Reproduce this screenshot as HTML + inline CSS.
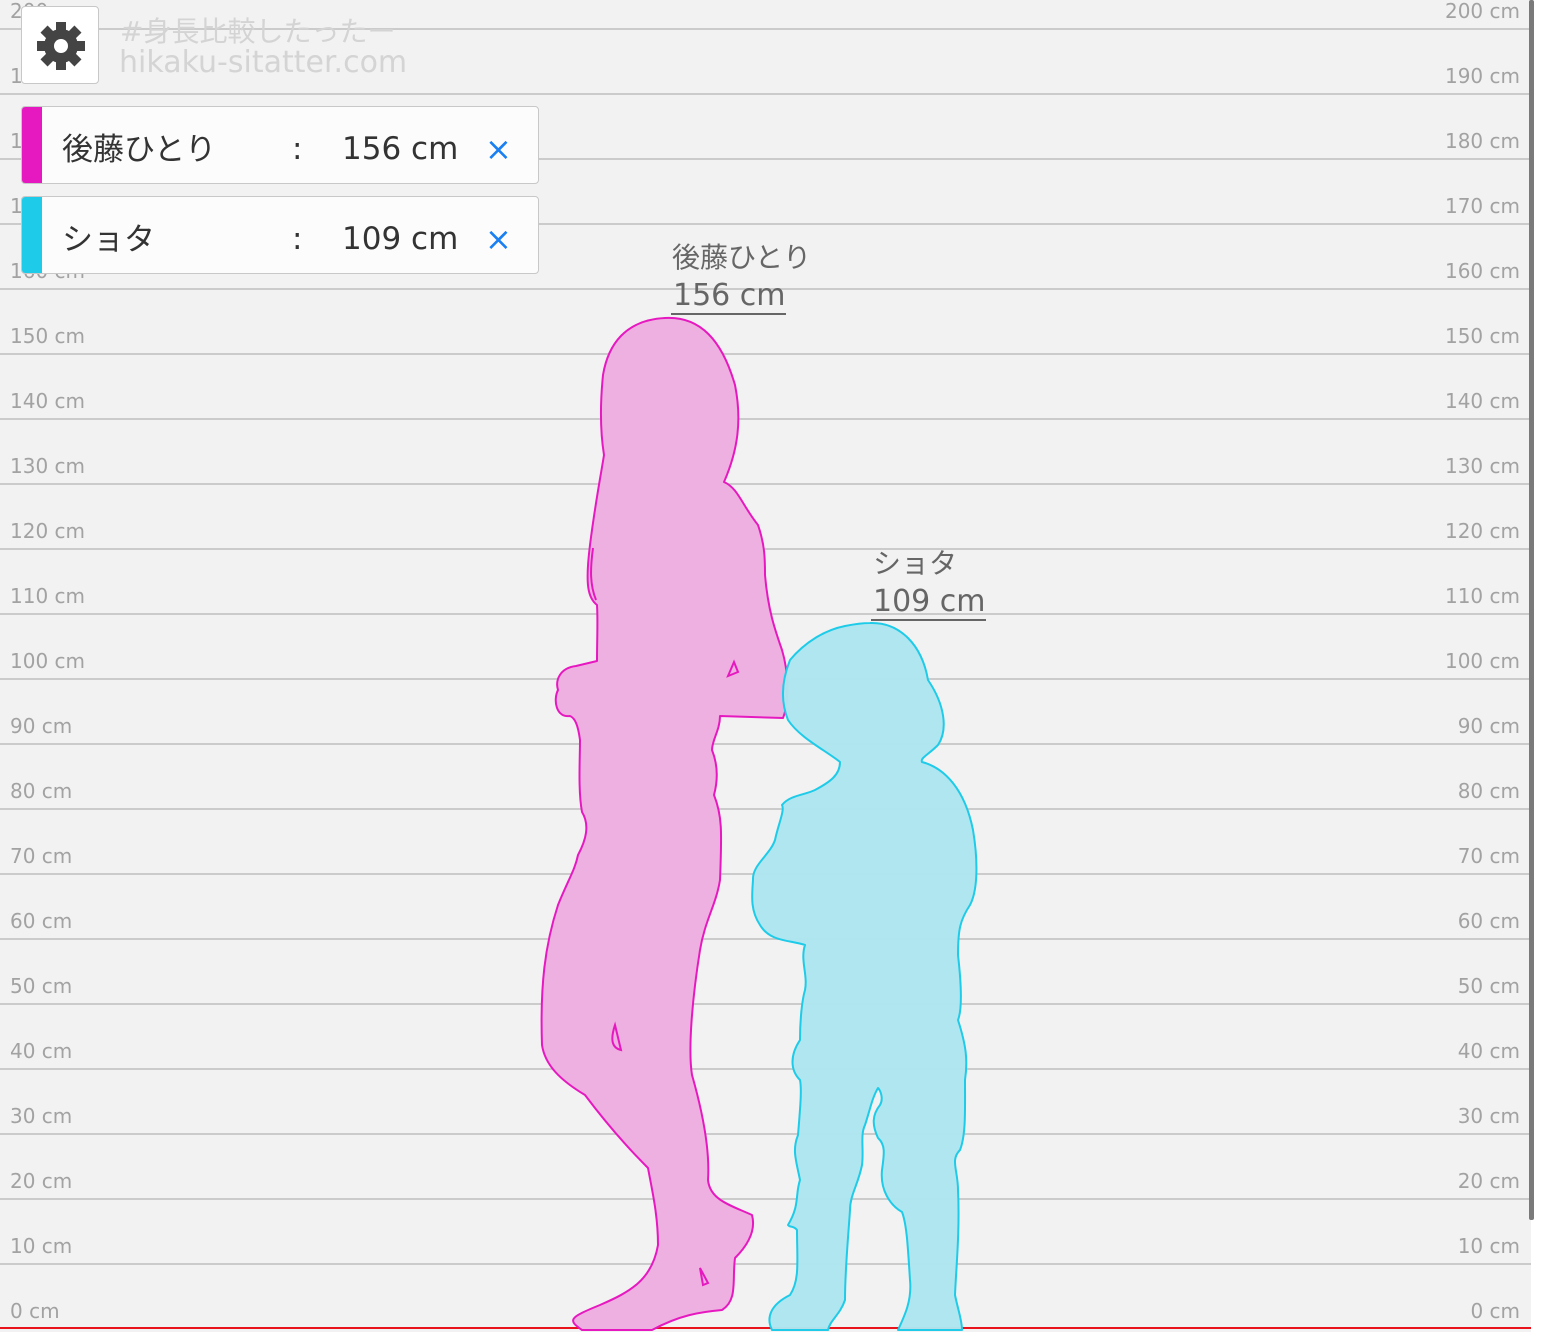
<!DOCTYPE html>
<html><head><meta charset="utf-8"><style>
html,body{margin:0;padding:0}
body{width:1541px;height:1332px;position:relative;overflow:hidden;background:#fff;font-family:"DejaVu Sans","Noto Sans CJK JP",sans-serif}
#chart{position:absolute;left:0;top:0;width:1531px;height:1332px;background:#f2f2f2}
.ln{position:absolute;left:0;width:1531px;height:2px;background:#cbcbcb}
.lb{position:absolute;font-size:20px;color:#a2a2a2;line-height:22px}
.l{left:10px}.r{right:11px;text-align:right}
.card{position:absolute;left:21px;width:516px;height:76px;background:#fcfcfc;border:1px solid #c8c8c8;border-radius:4px;overflow:hidden}
.card .bar{position:absolute;left:0;top:0;width:20px;height:100%}
.card span{position:absolute;top:24px;font-size:31px;color:#333;line-height:36px}
.cj{font-family:"Noto Sans CJK JP",sans-serif}
</style></head><body>
<div id="chart">
<div class="ln" style="top:28px"></div><div class="ln" style="top:93px"></div><div class="ln" style="top:158px"></div><div class="ln" style="top:223px"></div><div class="ln" style="top:288px"></div><div class="ln" style="top:353px"></div><div class="ln" style="top:418px"></div><div class="ln" style="top:483px"></div><div class="ln" style="top:548px"></div><div class="ln" style="top:613px"></div><div class="ln" style="top:678px"></div><div class="ln" style="top:743px"></div><div class="ln" style="top:808px"></div><div class="ln" style="top:873px"></div><div class="ln" style="top:938px"></div><div class="ln" style="top:1003px"></div><div class="ln" style="top:1068px"></div><div class="ln" style="top:1133px"></div><div class="ln" style="top:1198px"></div><div class="ln" style="top:1263px"></div>
<div class="ln" style="top:1327px;background:#e8131b"></div>

<div class="lb l" style="top:0px">200 cm</div><div class="lb r" style="top:0px">200 cm</div>
<div class="lb l" style="top:65px">190 cm</div><div class="lb r" style="top:65px">190 cm</div>
<div class="lb l" style="top:130px">180 cm</div><div class="lb r" style="top:130px">180 cm</div>
<div class="lb l" style="top:195px">170 cm</div><div class="lb r" style="top:195px">170 cm</div>
<div class="lb l" style="top:260px">160 cm</div><div class="lb r" style="top:260px">160 cm</div>
<div class="lb l" style="top:325px">150 cm</div><div class="lb r" style="top:325px">150 cm</div>
<div class="lb l" style="top:390px">140 cm</div><div class="lb r" style="top:390px">140 cm</div>
<div class="lb l" style="top:455px">130 cm</div><div class="lb r" style="top:455px">130 cm</div>
<div class="lb l" style="top:520px">120 cm</div><div class="lb r" style="top:520px">120 cm</div>
<div class="lb l" style="top:585px">110 cm</div><div class="lb r" style="top:585px">110 cm</div>
<div class="lb l" style="top:650px">100 cm</div><div class="lb r" style="top:650px">100 cm</div>
<div class="lb l" style="top:715px">90 cm</div><div class="lb r" style="top:715px">90 cm</div>
<div class="lb l" style="top:780px">80 cm</div><div class="lb r" style="top:780px">80 cm</div>
<div class="lb l" style="top:845px">70 cm</div><div class="lb r" style="top:845px">70 cm</div>
<div class="lb l" style="top:910px">60 cm</div><div class="lb r" style="top:910px">60 cm</div>
<div class="lb l" style="top:975px">50 cm</div><div class="lb r" style="top:975px">50 cm</div>
<div class="lb l" style="top:1040px">40 cm</div><div class="lb r" style="top:1040px">40 cm</div>
<div class="lb l" style="top:1105px">30 cm</div><div class="lb r" style="top:1105px">30 cm</div>
<div class="lb l" style="top:1170px">20 cm</div><div class="lb r" style="top:1170px">20 cm</div>
<div class="lb l" style="top:1235px">10 cm</div><div class="lb r" style="top:1235px">10 cm</div>
<div class="lb l" style="top:1300px">0 cm</div><div class="lb r" style="top:1300px">0 cm</div>

<svg style="position:absolute;left:0;top:0" width="1531" height="1332">
<path fill="#eeb0e0" stroke="#e619c0" stroke-width="2" stroke-linejoin="round" d="M665,318 C700,316 722,340 735,385 C742,420 738,450 724,482 C738,488 742,505 758,525 C765,545 765,560 765,575 C768,610 775,630 782,650 C788,670 790,700 783,718 L720,716 C720,730 712,740 712,750 C718,765 718,780 714,795 C722,815 722,830 720,880 C716,905 705,920 700,950 C692,1000 688,1050 692,1075 C702,1110 710,1150 708,1180 C710,1200 730,1205 752,1215 C756,1230 748,1245 735,1258 C732,1280 738,1300 722,1310 C700,1312 680,1315 652,1330 L582,1330 C568,1320 568,1318 600,1305 C630,1292 652,1280 658,1245 C658,1215 652,1190 648,1168 C620,1140 600,1115 585,1095 C560,1080 545,1065 542,1045 C540,985 545,945 558,905 C568,880 575,870 578,855 C586,840 590,825 582,812 C578,790 580,760 580,740 C578,725 575,718 570,716 C556,718 553,700 558,690 C555,680 560,668 576,666 L597,661 C597,640 598,620 597,605 C588,598 585,585 590,545 C595,505 600,480 604,455 C600,430 600,405 603,375 C608,345 625,320 665,318 Z"/>
<path fill="none" stroke="#e619c0" stroke-width="2" d="M615,1025 C610,1040 612,1048 621,1050 Z M734,662 L738,672 L728,676 Z M700,1268 L708,1283 L703,1285 Z M593,548 C590,570 590,585 596,600"/>
<path fill="#aee5ef" fill-opacity="0.98" stroke="#1ecbe8" stroke-width="2" stroke-linejoin="round" d="M870,623 C900,622 922,645 928,680 C945,705 948,730 938,745 C928,755 920,758 922,762 C945,768 965,790 973,830 C978,860 978,890 970,905 C960,920 958,930 958,955 C962,990 962,1010 958,1020 C966,1045 968,1060 965,1080 C965,1110 966,1135 960,1150 C950,1160 958,1170 958,1190 C960,1230 956,1270 955,1295 C958,1310 962,1320 962,1330 L898,1330 C905,1315 912,1300 910,1280 C908,1250 907,1225 902,1212 C890,1205 880,1190 882,1170 C884,1155 886,1145 878,1138 C872,1125 872,1115 880,1105 C884,1098 880,1090 878,1088 C872,1098 870,1110 865,1125 C860,1135 864,1150 862,1165 C858,1185 850,1195 850,1210 C848,1240 845,1270 845,1300 C840,1315 830,1320 828,1330 L772,1330 C766,1318 770,1305 790,1295 C800,1280 797,1260 797,1230 C793,1225 790,1228 788,1225 C800,1205 795,1195 800,1180 C796,1160 792,1150 798,1135 C800,1110 802,1090 800,1080 C790,1070 790,1055 800,1040 C800,1020 802,1000 805,990 C808,975 800,960 805,945 C790,940 770,942 760,925 C750,910 752,895 753,880 C752,865 770,855 775,840 C778,825 785,810 782,805 C790,795 805,795 815,790 C830,782 840,775 840,762 C825,750 800,738 788,720 C780,700 782,680 790,660 C805,642 825,630 845,626 C855,624 862,623 870,623 Z"/>
<line x1="671" y1="314" x2="786" y2="314" stroke="#666" stroke-width="2"/>
<line x1="871" y1="620" x2="986" y2="620" stroke="#666" stroke-width="2"/>
</svg>
<div class="cj" style="position:absolute;left:672px;top:238px;font-size:28px;color:#666;line-height:36px">後藤ひとり</div>
<div style="position:absolute;left:673px;top:278px;font-size:30px;color:#666;line-height:36px">156 cm</div>
<div class="cj" style="position:absolute;left:873px;top:544px;font-size:28px;color:#666;line-height:36px">ショタ</div>
<div style="position:absolute;left:873px;top:584px;font-size:30px;color:#666;line-height:36px">109 cm</div>
</div>
<div style="position:absolute;left:1529px;top:0;width:5px;height:1220px;background:#7a7a7a;border-radius:2px"></div>

<div style="position:absolute;left:120px;top:13px;font-size:28px;color:#d4d4d4;line-height:34px">#<span class="cj">身長比較したったー</span></div>
<div style="position:absolute;left:119px;top:45px;font-size:30px;color:#d4d4d4;line-height:36px">hikaku-sitatter.com</div>

<div style="position:absolute;left:21px;top:6px;width:76px;height:76px;background:#fff;border:1px solid #c8c8c8;border-radius:4px">
<svg width="76" height="76" viewBox="0 0 76 76" style="position:absolute;left:0;top:0">
<g transform="translate(39,39)" fill="#444">
<circle r="17"/>
<g id="t"><rect x="-5" y="-24" width="10" height="10"/></g>
<use href="#t" transform="rotate(45)"/><use href="#t" transform="rotate(90)"/><use href="#t" transform="rotate(135)"/><use href="#t" transform="rotate(180)"/><use href="#t" transform="rotate(225)"/><use href="#t" transform="rotate(270)"/><use href="#t" transform="rotate(315)"/>
<circle r="7" fill="#fff"/>
</g></svg></div>

<div class="card" style="top:106px"><div class="bar" style="background:#e619c0"></div>
<span class="cj" style="left:40px;top:22px">後藤ひとり</span><span style="left:270px">:</span><span style="left:320px">156 cm</span><span style="left:463px;color:#1a7ff0;font-size:32px">×</span></div>
<div class="card" style="top:196px"><div class="bar" style="background:#1ecbe8"></div>
<span class="cj" style="left:40px;top:22px">ショタ</span><span style="left:270px">:</span><span style="left:320px">109 cm</span><span style="left:463px;color:#1a7ff0;font-size:32px">×</span></div>
</body></html>
